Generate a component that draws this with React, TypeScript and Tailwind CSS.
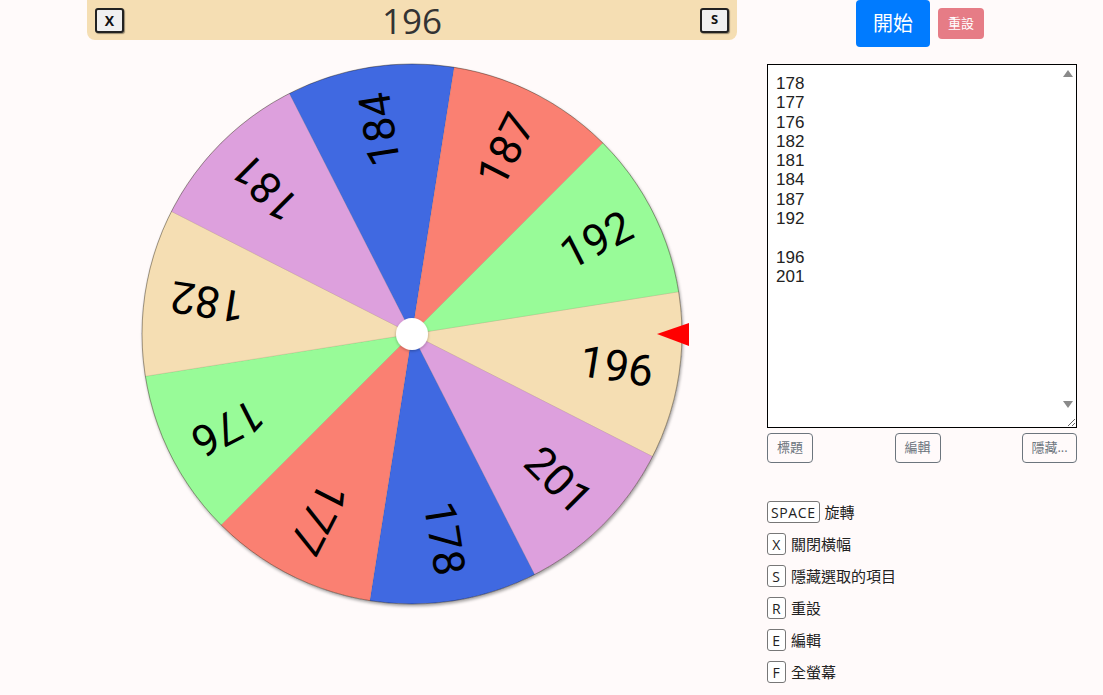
import React from "react";

const segments = [
  { label: "196", color: "#f5deb3" },
  { label: "201", color: "#dda0dd" },
  { label: "178", color: "#4169e1" },
  { label: "177", color: "#fa8072" },
  { label: "176", color: "#98fb98" },
  { label: "182", color: "#f5deb3" },
  { label: "181", color: "#dda0dd" },
  { label: "184", color: "#4169e1" },
  { label: "187", color: "#fa8072" },
  { label: "192", color: "#98fb98" },
];

const listText = "178\n177\n176\n182\n181\n184\n187\n192\n\n196\n201";

const shortcuts = [
  { key: "SPACE", text: "旋轉" },
  { key: "X", text: "關閉橫幅" },
  { key: "S", text: "隱藏選取的項目" },
  { key: "R", text: "重設" },
  { key: "E", text: "編輯" },
  { key: "F", text: "全螢幕" },
];

const CX = 325;
const CY = 294;
const R = 270;
const START = -9;

function slicePath(a0: number, a1: number) {
  const r0 = (a0 * Math.PI) / 180;
  const r1 = (a1 * Math.PI) / 180;
  const x0 = CX + R * Math.cos(r0);
  const y0 = CY + R * Math.sin(r0);
  const x1 = CX + R * Math.cos(r1);
  const y1 = CY + R * Math.sin(r1);
  return `M${CX},${CY} L${x0},${y0} A${R},${R} 0 0 1 ${x1},${y1} Z`;
}

function Wheel() {
  const step = 360 / segments.length;
  return (
    <svg width={650} height={620} viewBox="0 0 650 620" className="block font-['Roboto',Arial,sans-serif]">
      <defs>
        <filter id="wheelShadow" x="-10%" y="-10%" width="120%" height="120%">
          <feDropShadow dx="1" dy="2" stdDeviation="1.5" floodColor="#000" floodOpacity="0.35" />
        </filter>
        <filter id="hubShadow" x="-50%" y="-50%" width="200%" height="200%">
          <feDropShadow dx="0" dy="1" stdDeviation="1.5" floodColor="#000" floodOpacity="0.3" />
        </filter>
      </defs>
      <g filter="url(#wheelShadow)">
        <circle cx={CX} cy={CY} r={R} fill="#f5deb3" />
        {segments.map((s, i) => (
          <path
            key={i}
            d={slicePath(START + i * step, START + (i + 1) * step)}
            fill={s.color}
            stroke="rgba(0,0,0,0.12)"
            strokeWidth={0.6}
          />
        ))}
        <circle cx={CX} cy={CY} r={R} fill="none" stroke="rgba(0,0,0,0.45)" strokeWidth={0.7} />
      </g>
      {segments.map((s, i) => {
        const mid = START + i * step + step / 2;
        return (
          <text
            key={s.label + i}
            transform={`translate(${CX} ${CY}) rotate(${mid}) translate(207 0)`}
            textAnchor="middle"
            dominantBaseline="central"
            fontSize={44}
            fill="#000"
          >
            {s.label}
          </text>
        );
      })}
      <circle cx={CX} cy={CY} r={16} fill="#fff" filter="url(#hubShadow)" />
      <polygon points="570,294 602,283 602,306" fill="#ff0000" />
    </svg>
  );
}

export default function App() {
  return (
    <div
      className="min-h-[695px] w-full bg-[#fffafa] text-[#333]"
      style={{ fontFamily: "'Open Sans', 'Noto Sans CJK TC', sans-serif" }}
    >
      <div className="flex gap-[30px] pl-[87px]">
        <div className="w-[650px] shrink-0">
          <div className="flex h-[40px] items-center justify-between rounded-b-lg bg-[#f5deb3] px-2">
            <button className="flex h-[25px] w-[29px] items-center justify-center rounded-[3px] border-2 border-[#222] bg-[#f0f0f0] text-[14px] font-bold text-[#111] shadow-[1px_1px_1px_rgba(0,0,0,0.4)]">
              X
            </button>
            <div className="pt-[2px] text-[35px] leading-[38px] text-[#333]">196</div>
            <button className="flex h-[25px] w-[29px] items-center justify-center rounded-[3px] border-2 border-[#222] bg-[#f0f0f0] text-[13px] font-bold text-[#111] shadow-[1px_1px_1px_rgba(0,0,0,0.4)]">
              S
            </button>
          </div>
          <Wheel />
        </div>

        <div className="flex w-[310px] shrink-0 flex-col">
          <div className="flex items-center justify-center gap-2 pr-[4px]">
            <button className="h-[47px] w-[74px] rounded-[4px] bg-[#007bff] text-[20px] text-white">
              開始
            </button>
            <button className="h-[31px] w-[46px] rounded-[4px] bg-[#e67c86] text-[13px] text-white">
              重設
            </button>
          </div>

          <div className="relative mt-[17px] h-[364px] w-[310px]">
            <textarea
              readOnly
              value={listText}
              className="h-[364px] w-[310px] resize-y overflow-y-auto border border-black bg-white px-2 pt-[9px] text-[17px] leading-[19.3px] text-[#222] outline-none"
              style={{ fontFamily: "'Liberation Sans', Arial, sans-serif" }}
            />
            <span className="pointer-events-none absolute top-[6px] right-[4px] h-0 w-0 border-x-[5px] border-b-[7px] border-x-transparent border-b-[#8a8a8a]" />
            <span className="pointer-events-none absolute top-[337px] right-[4px] h-0 w-0 border-x-[5px] border-t-[7px] border-x-transparent border-t-[#8a8a8a]" />
          </div>

          <div className="mt-[5px] flex justify-between">
            <button className="h-[30px] w-[46px] rounded-[4px] border border-[#6c757d] text-[13px] text-[#6c757d]">
              標題
            </button>
            <button className="h-[30px] w-[46px] rounded-[4px] border border-[#6c757d] text-[13px] text-[#6c757d]">
              編輯
            </button>
            <button className="h-[30px] w-[55px] rounded-[4px] border border-[#6c757d] text-[13px] text-[#6c757d]">
              隱藏...
            </button>
          </div>

          <div className="mt-[38px] flex flex-col gap-[10px]">
            {shortcuts.map((s) => (
              <div key={s.key} className="flex h-[22px] items-center gap-[5px]">
                <span className="flex h-[22px] min-w-[19px] items-center justify-center rounded-[3px] border border-[#777] bg-white px-[3px] text-[14px] tracking-[0.6px] text-[#222]">
                  {s.key}
                </span>
                <span className="text-[15px] text-[#222]">{s.text}</span>
              </div>
            ))}
          </div>
        </div>
      </div>
    </div>
  );
}
